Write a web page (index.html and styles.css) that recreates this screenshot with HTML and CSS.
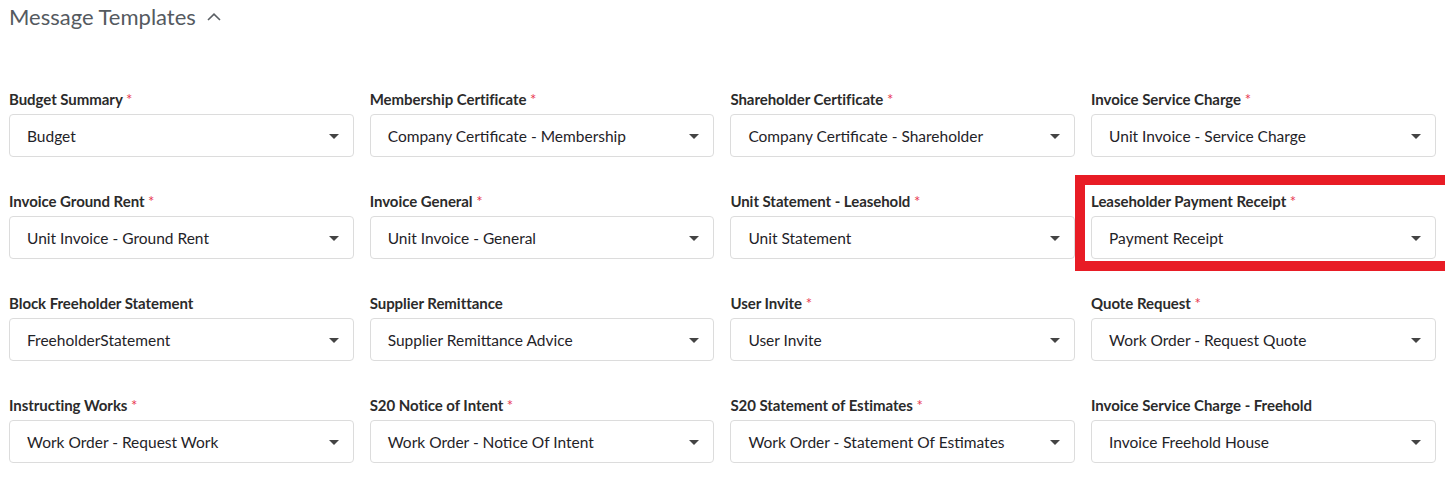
FILE: index.html
```html
<!DOCTYPE html>
<html>
<head>
<meta charset="utf-8">
<link rel="stylesheet" href="styles.css">
</head>
<body>
<div class="page">
  <div class="header">
    <span class="title">Message Templates</span>
    <svg class="chevron" width="14" height="8" viewBox="0 0 14 8"><path d="M1 7 L7 1.2 L13 7" fill="none" stroke="#5a5f64" stroke-width="1.6"/></svg>
  </div>
  <div class="grid">
    <div class="field"><div class="label">Budget Summary <span class="req">*</span></div><div class="select"><span>Budget</span><i class="caret"></i></div></div>
    <div class="field"><div class="label">Membership Certificate <span class="req">*</span></div><div class="select"><span>Company Certificate - Membership</span><i class="caret"></i></div></div>
    <div class="field"><div class="label">Shareholder Certificate <span class="req">*</span></div><div class="select"><span>Company Certificate - Shareholder</span><i class="caret"></i></div></div>
    <div class="field"><div class="label">Invoice Service Charge <span class="req">*</span></div><div class="select"><span>Unit Invoice - Service Charge</span><i class="caret"></i></div></div>

    <div class="field"><div class="label">Invoice Ground Rent <span class="req">*</span></div><div class="select"><span>Unit Invoice - Ground Rent</span><i class="caret"></i></div></div>
    <div class="field"><div class="label">Invoice General <span class="req">*</span></div><div class="select"><span>Unit Invoice - General</span><i class="caret"></i></div></div>
    <div class="field"><div class="label">Unit Statement - Leasehold <span class="req">*</span></div><div class="select"><span>Unit Statement</span><i class="caret"></i></div></div>
    <div class="field highlight"><div class="label">Leaseholder Payment Receipt <span class="req">*</span></div><div class="select"><span>Payment Receipt</span><i class="caret"></i></div></div>

    <div class="field"><div class="label">Block Freeholder Statement</div><div class="select"><span>FreeholderStatement</span><i class="caret"></i></div></div>
    <div class="field"><div class="label">Supplier Remittance</div><div class="select"><span>Supplier Remittance Advice</span><i class="caret"></i></div></div>
    <div class="field"><div class="label">User Invite <span class="req">*</span></div><div class="select"><span>User Invite</span><i class="caret"></i></div></div>
    <div class="field"><div class="label">Quote Request <span class="req">*</span></div><div class="select"><span>Work Order - Request Quote</span><i class="caret"></i></div></div>

    <div class="field"><div class="label">Instructing Works <span class="req">*</span></div><div class="select"><span>Work Order - Request Work</span><i class="caret"></i></div></div>
    <div class="field"><div class="label">S20 Notice of Intent <span class="req">*</span></div><div class="select"><span>Work Order - Notice Of Intent</span><i class="caret"></i></div></div>
    <div class="field"><div class="label">S20 Statement of Estimates <span class="req">*</span></div><div class="select"><span>Work Order - Statement Of Estimates</span><i class="caret"></i></div></div>
    <div class="field"><div class="label">Invoice Service Charge - Freehold</div><div class="select"><span>Invoice Freehold House</span><i class="caret"></i></div></div>
  </div>
</div>
</body>
</html>
```
FILE: styles.css
```css
*, *::before, *::after { box-sizing: border-box; }
html, body { margin: 0; padding: 0; background: #fff; }
body { font-family: Lato, "Open Sans", Arial, sans-serif; color: #222; }
.page { padding: 0 10px 0 9px; width: 1445px; }
.header {
  display: flex;
  align-items: center;
  height: 33px;
}
.title {
  font-size: 22px;
  color: #555a5f;
}
.chevron { margin-left: 11px; margin-top: 1px; }
.grid {
  display: grid;
  grid-template-columns: repeat(4, 344.5px);
  column-gap: 16.2px;
  row-gap: 35px;
  margin-top: 57px;
}
.field { position: relative; }
.label {
  font-size: 15px;
  font-weight: 700;
  color: #2b2b2b;
  height: 18px;
  line-height: 18px;
  margin-bottom: 6px;
  letter-spacing: -0.05px;
}
.req { color: #e8384f; font-weight: 400; font-size: 15px; }
.select {
  height: 43px;
  border: 1px solid #dcdcdc;
  border-radius: 4px;
  display: flex;
  align-items: center;
  justify-content: space-between;
  padding: 0 14px 0 17px;
  font-size: 15.5px;
  color: #1f2328;
}
.caret {
  width: 0; height: 0;
  border-left: 5px solid transparent;
  border-right: 5px solid transparent;
  border-top: 5px solid #444;
  margin-top: 1px;
}
.highlight::after {
  content: "";
  position: absolute;
  left: -16px;
  top: -17px;
  width: 380px;
  height: 96px;
  border: 10px solid #e81c25;
  pointer-events: none;
}
```
